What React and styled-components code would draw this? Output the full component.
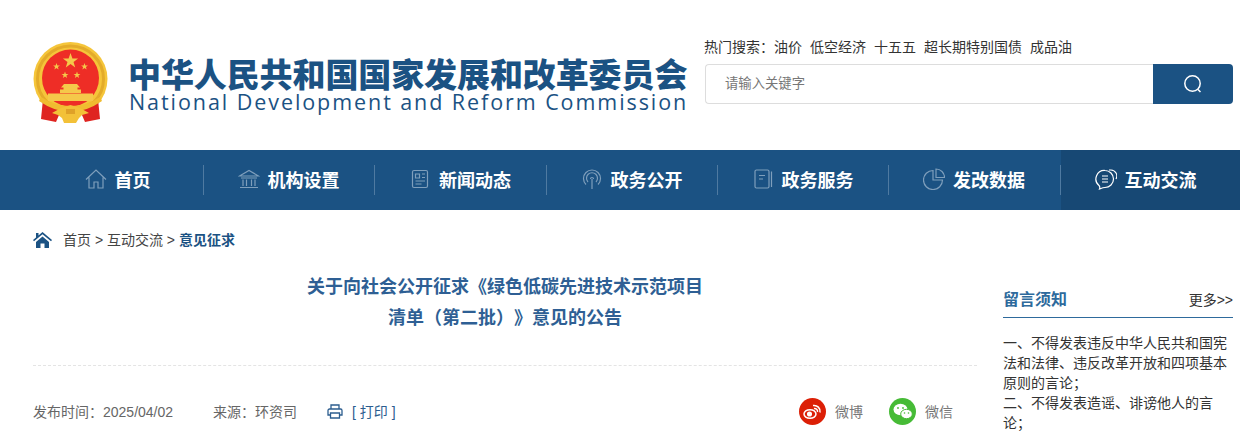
import React from "react";
import styled, { createGlobalStyle } from "styled-components";

const CJK = `"Liberation Sans", "Noto Sans CJK SC", sans-serif`;
const BLUE = "#1b5283";

const GlobalStyle = createGlobalStyle`
  html, body {
    margin: 0;
    padding: 0;
    background: #fff;
    font-family: ${CJK};
    text-spacing-trim: space-all;
  }
  body { height: 443px; overflow: hidden; }
  * { box-sizing: border-box; }
`;

const Header = styled.header`
  height: 150px;
  padding: 0 7px 0 33px;
  display: flex;
  justify-content: space-between;
`;
const Brand = styled.div`
  display: flex;
  padding-top: 42px;
  gap: 21px;
`;
const BrandText = styled.div`
  display: flex;
  flex-direction: column;
  color: ${BLUE};
  padding-top: 13px;
`;
const BrandCn = styled.div`
  font-family: "Noto Sans CJK SC", sans-serif;
  font-size: 33px;
  line-height: 36px;
  font-weight: 900;
  letter-spacing: -0.1px;
  white-space: nowrap;
  margin-left: -1px;
`;
const BrandEn = styled.div`
  font-family: "Open Sans", sans-serif;
  font-size: 21.5px;
  line-height: 26px;
  letter-spacing: 1.93px;
  white-space: nowrap;
  margin-top: -2px;
`;
const SearchArea = styled.div`
  width: 528px;
  padding-top: 38px;
`;
const HotRow = styled.div`
  display: flex;
  gap: 8px;
  font-size: 14px;
  line-height: 18px;
  color: #333;
  margin-left: -1px;
  white-space: nowrap;
`;
const SearchBox = styled.div`
  margin-top: 8px;
  height: 40px;
  display: flex;
`;
const SearchInput = styled.div`
  flex: 1;
  border: 1px solid #ddd;
  border-right: none;
  border-radius: 4px 0 0 4px;
  padding-left: 19px;
  font-size: 13.33px;
  line-height: 38px;
  color: #777;
`;
const SearchButton = styled.div`
  width: 80px;
  background: ${BLUE};
  border-radius: 0 4px 4px 0;
  display: flex;
  align-items: center;
  justify-content: center;
`;

const Nav = styled.nav`
  height: 60px;
  background: ${BLUE};
  padding-left: 33px;
  display: flex;
`;
const NavItem = styled.div`
  position: relative;
  flex: 0 0 ${(p) => p.$w}px;
  display: flex;
  align-items: center;
  justify-content: center;
  gap: 8px;
  padding: 0 ${(p) => (p.$active ? 10 : 2)}px 2px 0;
  color: #fff;
  font-size: 18px;
  font-weight: 700;
  background: ${(p) => (p.$active ? "#174874" : "transparent")};
  &::after {
    content: "";
    display: ${(p) => (p.$last ? "none" : "block")};
    position: absolute;
    right: 0;
    top: 15px;
    height: 30px;
    width: 1px;
    background: #4f7aa1;
  }
`;
const NavIcon = styled.svg`
  width: 22px;
  height: 22px;
  fill: none;
  stroke: ${(p) => (p.$active ? "#fff" : "#7f9fbc")};
  stroke-width: 1.2;
`;

const Crumbs = styled.div`
  height: 60px;
  padding: 20px 0 0 33px;
  display: flex;
  align-items: flex-start;
  font-size: 14px;
  line-height: 20px;
  color: #444;
  white-space: nowrap;
`;
const CrumbIcon = styled.svg`
  margin-top: 2px;
  fill: ${BLUE};
`;
const CrumbText = styled.span`
  margin-left: 11px;
`;
const CrumbNow = styled.b`
  color: ${BLUE};
`;

const Main = styled.div`
  display: flex;
  padding: 0 7px 0 33px;
  justify-content: space-between;
`;
const Article = styled.article`
  width: 944px;
`;
const Title = styled.h1`
  margin: 0 auto;
  width: 440px;
  padding-top: 2px;
  height: 95px;
  text-align: center;
  font-size: 18px;
  line-height: 31px;
  font-weight: 700;
  color: #2e5f94;
`;
const Rule = styled.div`
  height: 0;
  border-top: 1px dashed #e4e4e4;
`;
const Meta = styled.div`
  display: flex;
  align-items: center;
  height: 36px;
  margin-top: 27px;
  font-size: 14px;
  color: #666;
  white-space: nowrap;
`;
const MetaItem = styled.span`
  margin-right: ${(p) => p.$gap}px;
`;
const PrintLabel = styled.span`
  color: #2c5d8f;
  margin-left: 9px;
`;
const Share = styled.div`
  margin-left: auto;
  padding-right: 24px;
  display: flex;
  align-items: center;
  color: #777;
`;
const ShareDot = styled.span`
  width: 27px;
  height: 27px;
  border-radius: 50%;
  background: ${(p) => p.$bg};
  display: flex;
  align-items: center;
  justify-content: center;
  margin: 0 9px 0 ${(p) => p.$left}px;
`;

const Aside = styled.aside`
  width: 230px;
  padding-top: 18px;
`;
const AsideHead = styled.div`
  height: 30px;
  display: flex;
  justify-content: space-between;
  align-items: flex-start;
  border-bottom: 1px solid #2e6a9c;
`;
const AsideTitle = styled.span`
  font-size: 16px;
  line-height: 24px;
  font-weight: 700;
  color: #2e6a9c;
`;
const AsideMore = styled.span`
  font-size: 14px;
  line-height: 24px;
  color: #333;
`;
const AsideBody = styled.div`
  margin-top: 15px;
  font-size: 14px;
  line-height: 20px;
  color: #333;
`;

const Emblem = () => (
  <svg width="75" height="82" viewBox="0 0 75 82">
    <defs>
      <polygon id="st" points="0,-10 2.4,-3.1 9.5,-3.1 3.8,1.2 5.9,8.1 0,3.9 -5.9,8.1 -3.8,1.2 -9.5,-3.1 -2.4,-3.1" />
    </defs>
    <circle cx="37.5" cy="37" r="37" fill="#f5c53a" />
    <circle cx="37.5" cy="37" r="33" fill="none" stroke="#e3ab2a" strokeWidth="3" />
    <circle cx="37.5" cy="36" r="28.500" fill="#ee2d26" />
    <g fill="#f5c84a">
      <use href="#st" transform="translate(37.500 19) scale(.8)" />
      <use href="#st" transform="translate(23.500 24.500) scale(.36)" />
      <use href="#st" transform="translate(51.500 24.500) scale(.36)" />
      <use href="#st" transform="translate(32 33) scale(.36)" />
      <use href="#st" transform="translate(44 33) scale(.36)" />
      <path d="M31 42h13l3 3.500h-2.500v2H48v3.500H27v-3.500h3.500v-2H28z" />
      <path d="M15 51.500h45v7.500H15z" />
    </g>
    <path d="M10 57 L8 77 L23 80 L29 66z M65 57 L67 77 L52 80 L46 66z" fill="#df2420" />
    <path d="M8 55 Q22 64 37.500 64 Q53 64 67 55 L69 59 Q53 70 37.500 70 Q22 70 6 59Z" fill="#f0bc30" />
    <path d="M28 66l9.500-3 9.500 3 9 5-7 2-3 3-3 5H31l-2-5-4-3-6-2z" fill="#f3c138" />
    <path d="M33 67h9v5h-9z" fill="#dfa128" />
  </svg>
);

const SearchIcon = () => (
  <svg width="20" height="20" viewBox="0 0 20 20" fill="none" stroke="#fff" strokeWidth="1.5">
    <circle cx="9.5" cy="9.5" r="7.7" />
    <path d="M15 15.5l2.5 2.5" />
  </svg>
);

const icons = {
  home: <path d="M1 11.500 11 2l10 9.500M4 9.500V20h5v-6h4v6h5V9.500" />,
  bank: <path d="M1.500 8 11 2.500 20.500 8zM3 10h16M5 11.500V18M8.500 11.500V18M13.500 11.500V18M17 11.500V18M2 19.500h18" />,
  news: <path d="M5 2.500h12a1.500 1.500 0 0 1 1.500 1.500v14a1.500 1.500 0 0 1-1.500 1.500H5A1.500 1.500 0 0 1 3.500 18V4A1.500 1.500 0 0 1 5 2.500zM6.500 6h4v4h-4zM13 6h3M13 9.500h3M6.500 13h9.500M6.500 16h6" />,
  signal: <path d="M11 21V11M9.500 11a1.500 1.500 0 1 1 3 0M7 14a5.500 5.500 0 1 1 8 0M5 16.500a8.500 8.500 0 1 1 12 0" />,
  book: <path d="M3 3.500A1.500 1.500 0 0 1 4.500 2h11A1.500 1.500 0 0 1 17 3.500v15a1.500 1.500 0 0 1-1.500 1.500h-11A1.500 1.500 0 0 1 3 18.500zM7 7.500h6M7 11h4M19.500 3.500V19" />,
  pie: <path d="M10 2.500a9.500 9.500 0 1 0 9.500 9.500H10zM13 1v8.500h8.500A8.500 8.500 0 0 0 13 1z" />,
  chat: <path d="M10 2.500a8.500 8.500 0 0 1 0 17c-2 0-3 .5-5.500 1.500.5-1.500.5-2.500-.5-3.500A8.500 8.500 0 0 1 10 2.500zM7 8h6M7 11h6M7 14h6M14 2h2a6 6 0 0 1 5 9" />,
};

const navItems = [
  { label: "首页", icon: "home", w: 171 },
  { label: "机构设置", icon: "bank", w: 171 },
  { label: "新闻动态", icon: "news", w: 172 },
  { label: "政务公开", icon: "signal", w: 171 },
  { label: "政务服务", icon: "book", w: 171 },
  { label: "发改数据", icon: "pie", w: 172 },
  { label: "互动交流", icon: "chat", w: 179, active: true, last: true },
];

const hotWords = ["油价", "低空经济", "十五五", "超长期特别国债", "成品油"];

export default function App() {
  return (
    <>
      <GlobalStyle />
      <Header>
        <Brand>
          <Emblem />
          <BrandText>
            <BrandCn>中华人民共和国国家发展和改革委员会</BrandCn>
            <BrandEn>National Development and Reform Commission</BrandEn>
          </BrandText>
        </Brand>
        <SearchArea>
          <HotRow>
            <span>热门搜索：{hotWords[0]}</span>
            {hotWords.slice(1).map((w) => (
              <span key={w}>{w}</span>
            ))}
          </HotRow>
          <SearchBox>
            <SearchInput>请输入关键字</SearchInput>
            <SearchButton>
              <SearchIcon />
            </SearchButton>
          </SearchBox>
        </SearchArea>
      </Header>
      <Nav>
        {navItems.map((n) => (
          <NavItem key={n.label} $w={n.w} $active={n.active} $last={n.last}>
            <NavIcon viewBox="0 0 22 22" $active={n.active}>
              {icons[n.icon]}
            </NavIcon>
            {n.label}
          </NavItem>
        ))}
      </Nav>
      <Crumbs>
        <CrumbIcon width="19" height="16" viewBox="0 0 19 16">
          <path d="M9.500 0 19 8l-1 1.200L9.500 2.300 1 9.200 0 8l3-2.500V1h2.500v2.400zM3 10l6.500-5.500L16 10v6h-4.500v-4.500h-4V16H3z" />
        </CrumbIcon>
        <CrumbText>
          首页 &gt; 互动交流 &gt; <CrumbNow>意见征求</CrumbNow>
        </CrumbText>
      </Crumbs>
      <Main>
        <Article>
          <Title>
            关于向社会公开征求《绿色低碳先进技术示范项目
            <br />
            清单（第二批）》意见的公告
          </Title>
          <Rule />
          <Meta>
            <MetaItem $gap={40}>发布时间：2025/04/02</MetaItem>
            <MetaItem $gap={30}>来源：环资司</MetaItem>
            <svg width="16" height="15" viewBox="0 0 16 15" fill="none" stroke="#2c5d8f" strokeWidth="1.3">
              <path d="M4 5V1h8v4M3.500 11H1V6.500A1.500 1.500 0 0 1 2.500 5h11A1.500 1.500 0 0 1 15 6.500V11h-2.500" />
              <path d="M3.500 9h9v5h-9z" />
            </svg>
            <PrintLabel>[ 打印 ]</PrintLabel>
            <Share>
              <ShareDot $bg="#dc1f06" $left={0}>
                <svg width="19" height="17" viewBox="0 0 19 17" fill="none" stroke="#fff" strokeWidth="1.500">
                  <ellipse cx="7" cy="11" rx="6" ry="4.300" />
                  <circle cx="6.500" cy="11" r="1.800" fill="#fff" />
                  <path d="M10 2.500a6 6 0 0 1 7 7M11 5.500a3 3 0 0 1 3.500 3.500" />
                </svg>
              </ShareDot>
              微博
              <ShareDot $bg="#46bb36" $left={26}>
                <svg width="20" height="17" viewBox="0 0 20 17" fill="#fff">
                  <ellipse cx="7.500" cy="6.500" rx="7" ry="5.700" />
                  <ellipse cx="13.500" cy="11" rx="5.800" ry="4.700" stroke="#46bb36" strokeWidth="1" />
                  <circle cx="5" cy="5" r=".9" fill="#46bb36" />
                  <circle cx="10" cy="5" r=".9" fill="#46bb36" />
                  <circle cx="11.500" cy="10" r=".8" fill="#46bb36" />
                  <circle cx="15.500" cy="10" r=".8" fill="#46bb36" />
                </svg>
              </ShareDot>
              微信
            </Share>
          </Meta>
        </Article>
        <Aside>
          <AsideHead>
            <AsideTitle>留言须知</AsideTitle>
            <AsideMore>更多&gt;&gt;</AsideMore>
          </AsideHead>
          <AsideBody>
            一、不得发表违反中华人民共和国宪法和法律、违反改革开放和四项基本原则的言论；
            <br />
            二、不得发表造谣、诽谤他人的言论；
          </AsideBody>
        </Aside>
      </Main>
    </>
  );
}
